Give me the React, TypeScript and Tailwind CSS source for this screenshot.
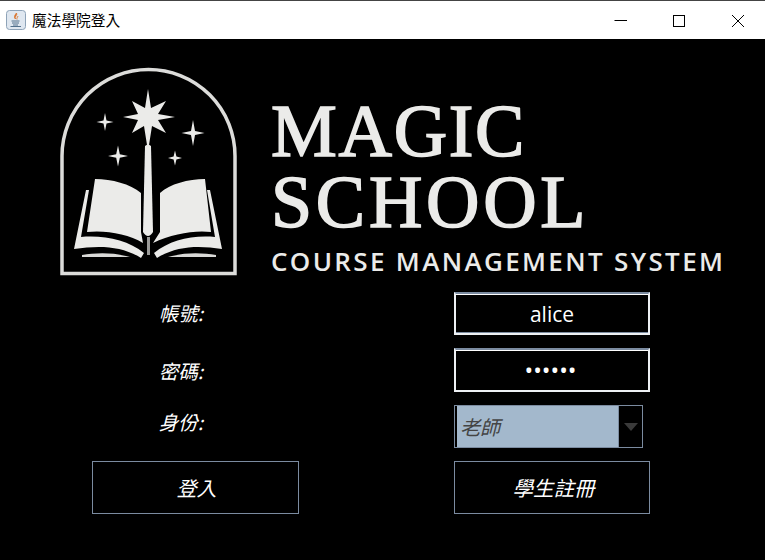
const cjk = "font-['Noto_Sans_CJK_TC','Noto_Sans',sans-serif]";

function sparkle(cx: number, cy: number, rx: number, ry: number, w: number) {
  return `M${cx} ${cy - ry}L${cx + w} ${cy - w}L${cx + rx} ${cy}L${cx + w} ${cy + w}L${cx} ${cy + ry}L${cx - w} ${cy + w}L${cx - rx} ${cy}L${cx - w} ${cy - w}Z`;
}

function JavaIcon() {
  return (
    <svg width="20" height="20" viewBox="0 0 20 20" className="shrink-0">
      <rect x="0.5" y="0.5" width="19" height="19" rx="3" fill="#dfe7f0" stroke="#8ea3b8" />
      <path d="M10.5 3C12 5 8 6.500 9.500 9C8 7.500 8 6 10.500 3Z" fill="#d9722b" stroke="#d9722b" strokeWidth="0.8" />
      <path d="M12 6C11.500 7.500 10.500 8 11 9.500" fill="none" stroke="#d9722b" strokeWidth="0.9" />
      <path d="M5.500 11H13.500M6 13H13M7 15H12M4.500 16.500H15" stroke="#52708c" strokeWidth="1" fill="none" />
    </svg>
  );
}

function LogoMark() {
  const paper = "#ebebe9";
  return (
    <svg width="200" height="225" viewBox="50 60 200 225" className="shrink-0">
      <path d="M62 273.500V156A86.500 86.500 0 0 1 235 156V273.500Z" fill="none" stroke="#dcdcda" strokeWidth="3.500" />
      <path d="M148 89L151 108L166 101L158 114L175 117L158 120L166 133L152 126L149 145H147L144 126L132 133L138 120L123 117L138 114L132 101L145 108Z" fill={paper} />
      <path d={sparkle(105, 122, 8.500, 9, 1.500)} fill={paper} />
      <path d={sparkle(193, 133, 11.500, 13, 2)} fill={paper} />
      <path d={sparkle(118, 156, 10, 10.500, 1.800)} fill={paper} />
      <path d={sparkle(175, 158, 7, 7.500, 1.400)} fill={paper} />
      <path d="M145 146Q148 143 151 146L153 232Q148 240 143 232Z" fill={paper} />
      <path d="M95 179C112 179 130 184 141 193V232L143 243C128 234 106 230 87 232Z" fill={paper} />
      <path d="M205 179C188 179 170 184 160 193V232L153 243C172 234 194 230 211 232Z" fill={paper} />
      <path d="M86 190H89L81 237C104 235 128 240 144 253L141 258C122 246 100 245 74 249Z" fill={paper} />
      <path d="M210 190H207L215 237C192 235 170 240 154 253L157 258C176 246 198 245 222 249Z" fill={paper} />
      <path d="M82 255C95 253 112 252 130 257H82Z" fill="#d8d8d6" />
      <path d="M216 255C203 253 186 252 168 257H216Z" fill="#d8d8d6" />
      <path d="M147 237H150V255H147Z" fill="#9a9a98" />
    </svg>
  );
}

function WindowControls() {
  return (
    <div className="flex items-center">
      <svg width="58" height="38" viewBox="0 0 58 38"><path d="M14.500 19.500H27" stroke="#000" /></svg>
      <svg width="58" height="38" viewBox="0 0 58 38"><rect x="15.500" y="14.500" width="11" height="11" fill="none" stroke="#000" /></svg>
      <svg width="49" height="38" viewBox="0 0 49 38"><path d="M16 14L28 26M28 14L16 26" stroke="#000" /></svg>
    </div>
  );
}

function Label(props: { text: string; className: string }) {
  return (
    <div className={`flex justify-center pr-[29px] text-[19.500px] leading-none text-white italic ${cjk} ${props.className}`}>
      {props.text}
    </div>
  );
}

export default function App() {
  return (
    <div className="flex h-[560px] w-[765px] flex-col overflow-hidden bg-black">
      <div className="flex h-[39px] shrink-0 items-center justify-between border-t border-[#444] bg-white pl-[6px]">
        <div className="flex items-center gap-[6px]">
          <JavaIcon />
          <span className={`text-[14.700px] text-black ${cjk}`}>魔法學院登入</span>
        </div>
        <WindowControls />
      </div>

      <div className="mt-[21px] flex pl-[50px]">
        <LogoMark />
        <div className="ml-[21px] flex flex-col pt-[36px] font-['Liberation_Serif',serif] text-[#ebebe9]">
          <div className="text-[74px] leading-[71px] tracking-[1.700px] [-webkit-text-stroke:1.600px_#ebebe9]">MAGIC</div>
          <div className="text-[74px] leading-[71px] tracking-[3.700px] [-webkit-text-stroke:1.600px_#ebebe9]">SCHOOL</div>
          <div className="mt-[8px] font-['Open_Sans',sans-serif] text-[26px] leading-[30px] font-semibold tracking-[2.350px] whitespace-nowrap">
            COURSE MANAGEMENT SYSTEM
          </div>
        </div>
      </div>

      <div className="mt-[7px] ml-[92px] grid w-[558px] grid-cols-[207px_196px] justify-between">
        <Label text="帳號:" className="pt-[11px]" />
        <input
          readOnly
          value="alice"
          className="h-[43px] w-[196px] border-2 border-[#eef1f4] border-t-[#7b8ba0] bg-black text-center font-['Open_Sans',sans-serif] text-[21px] text-white shadow-[inset_0_1px_0_#fff,inset_0_-1px_0_#7b8ba0] outline-none"
        />

        <Label text="密碼:" className="mt-[13px] pt-[13px]" />
        <input
          readOnly
          type="password"
          value="123456"
          className="mt-[13px] h-[44px] w-[196px] border-2 border-[#eef1f4] border-t-[#7b8ba0] bg-black pr-[3px] text-center font-['Open_Sans',sans-serif] text-[23px] text-white shadow-[inset_0_1px_0_#fff] outline-none"
        />

        <Label text="身份:" className="mt-[13px] pt-[7px]" />
        <div className="mt-[13px] flex h-[43px] w-[189px] border border-[#7b8ba0] bg-black">
          <div className={`flex flex-1 items-center border-l-2 border-black bg-[#a3b8cc] pl-[3px] text-[20px] text-[#444] italic ${cjk}`}>
            老師
          </div>
          <div className="flex w-[24px] items-center justify-center border-l border-[#7b8ba0]">
            <svg width="16" height="8" viewBox="0 0 16 8"><path d="M1 0H15L8 8Z" fill="#3a3a3a" /></svg>
          </div>
        </div>

        <button className={`mt-[13px] flex h-[53px] items-center justify-center border border-[#7b8ba0] bg-black pl-[2px] text-[20px] text-white italic ${cjk}`}>
          登入
        </button>
        <button className={`mt-[13px] flex h-[53px] items-center justify-center border border-[#7b8ba0] bg-black pl-[3px] text-[20.500px] text-white italic ${cjk}`}>
          學生註冊
        </button>
      </div>
    </div>
  );
}
